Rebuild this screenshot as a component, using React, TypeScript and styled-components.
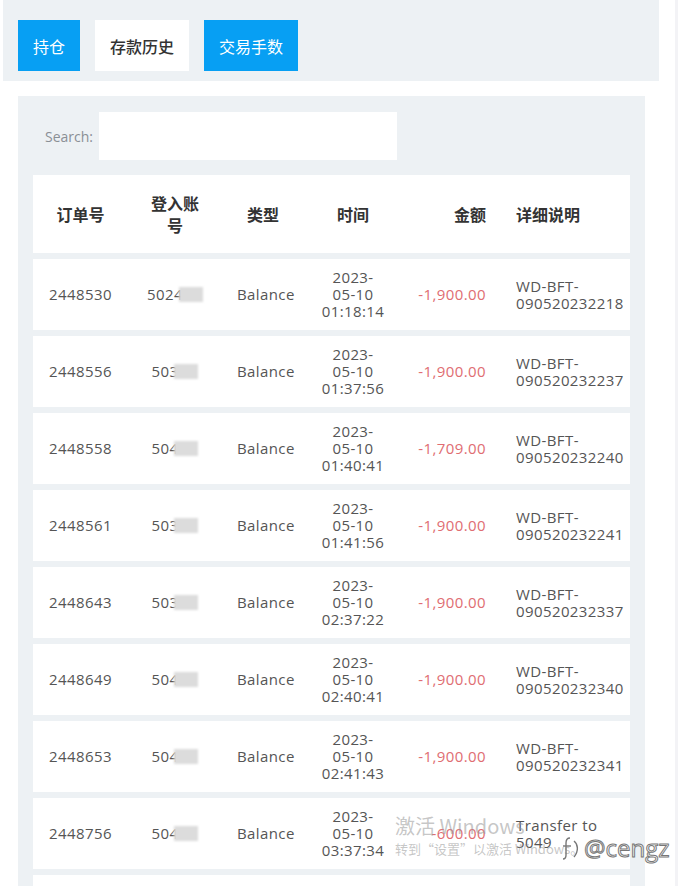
import React from "react";
import styled, { createGlobalStyle } from "styled-components";

const GlobalStyle = createGlobalStyle`
  html, body {
    margin: 0;
    padding: 0;
    background: #ffffff;
  }
  body {
    font-family: "Open Sans", "Noto Sans CJK SC", sans-serif;
    color: #555;
  }
`;

const Page = styled.div`
  position: relative;
  width: 678px;
  min-height: 886px;
  border-right: 3px solid #f3f3f6;
  box-sizing: border-box;
`;

const TabBar = styled.div`
  display: flex;
  gap: 15px;
  margin-left: 3px;
  width: 656px;
  height: 81px;
  box-sizing: border-box;
  padding: 20px 15px 0;
  background: #edf1f4;
`;

const TabButton = styled.div<{ $active?: boolean }>`
  height: 51px;
  padding: 0 15px;
  display: flex;
  align-items: center;
  font-family: "Noto Sans CJK SC", sans-serif;
  font-size: 16px;
  background: ${(p) => (p.$active ? "#ffffff" : "#079ff3")};
  color: ${(p) => (p.$active ? "#333" : "#ffffff")};
  font-weight: ${(p) => (p.$active ? 500 : 400)};
`;

const Panel = styled.div`
  margin: 15px 0 0 18px;
  width: 627px;
  box-sizing: border-box;
  padding: 16px 15px 0;
  background: #edf1f4;
`;

const SearchRow = styled.label`
  display: flex;
  align-items: center;
  padding-left: 12px;
  font-size: 14px;
  color: #8a8f94;
`;

const SearchInput = styled.div`
  width: 298px;
  height: 48px;
  margin-left: 6px;
  background: #ffffff;
`;

const Table = styled.table`
  width: 597px;
  margin-top: 9px;
  border-collapse: separate;
  border-spacing: 0 6px;
  table-layout: fixed;
  margin-bottom: -6px;
`;

const HeadCell = styled.th<{ $align?: string }>`
  height: 78px;
  padding: 0 15px;
  background: #ffffff;
  font-family: "Noto Sans CJK SC", sans-serif;
  font-size: 16px;
  font-weight: 700;
  color: #333;
  line-height: 22px;
  text-align: ${(p) => p.$align || "center"};
`;

const Cell = styled.td<{ $align?: string; $tight?: boolean }>`
  height: 71px;
  padding: ${(p) => (p.$tight ? "0 2px 0 15px" : "0 15px")};
  background: #ffffff;
  font-size: 15px;
  line-height: 17px;
  letter-spacing: 0.4px;
  color: #555;
  white-space: nowrap;
  text-align: ${(p) => p.$align || "center"};
`;

const Amount = styled.span`
  color: #e06d72;
`;

const Masked = styled.span`
  display: inline-block;
  width: 24px;
  height: 15px;
  margin-left: -4px;
  vertical-align: -2px;
  background: #dcdcdc;
  filter: blur(1px);
`;

const Watermark = styled.div`
  position: absolute;
  left: 395px;
  top: 812px;
  color: rgba(150, 150, 150, 0.55);
  font-family: "Noto Sans CJK SC", sans-serif;
  pointer-events: none;
`;

const WmTitle = styled.div`
  font-size: 20px;
  line-height: 28px;
`;

const WmSub = styled.div`
  font-size: 13px;
  line-height: 18px;
`;

const Handle = styled.div`
  position: absolute;
  left: 560px;
  top: 831px;
  display: flex;
  align-items: center;
  gap: 2px;
  font-family: "Open Sans", sans-serif;
  font-size: 24px;
  color: rgba(255, 255, 255, 0.8);
  -webkit-text-stroke: 1px #777;
  pointer-events: none;
`;

interface Row {
  id: string;
  acct: string;
  time: string;
  amount: string;
  detail: [string, string];
}

const rows: Row[] = [
  { id: "2448530", acct: "5024", time: "01:18:14", amount: "-1,900.00", detail: ["WD-BFT-", "090520232218"] },
  { id: "2448556", acct: "503", time: "01:37:56", amount: "-1,900.00", detail: ["WD-BFT-", "090520232237"] },
  { id: "2448558", acct: "504", time: "01:40:41", amount: "-1,709.00", detail: ["WD-BFT-", "090520232240"] },
  { id: "2448561", acct: "503", time: "01:41:56", amount: "-1,900.00", detail: ["WD-BFT-", "090520232241"] },
  { id: "2448643", acct: "503", time: "02:37:22", amount: "-1,900.00", detail: ["WD-BFT-", "090520232337"] },
  { id: "2448649", acct: "504", time: "02:40:41", amount: "-1,900.00", detail: ["WD-BFT-", "090520232340"] },
  { id: "2448653", acct: "504", time: "02:41:43", amount: "-1,900.00", detail: ["WD-BFT-", "090520232341"] },
  { id: "2448756", acct: "504", time: "03:37:34", amount: "-600.00", detail: ["Transfer to", "5049"] },
  { id: "2448790", acct: "504", time: "03:52:10", amount: "-1,900.00", detail: ["WD-BFT-", "090520232352"] },
];

const App: React.FC = () => {
  return (
    <Page>
      <GlobalStyle />
      <TabBar>
        <TabButton>持仓</TabButton>
        <TabButton $active>存款历史</TabButton>
        <TabButton>交易手数</TabButton>
      </TabBar>
      <Panel>
        <SearchRow>
          Search:
          <SearchInput />
        </SearchRow>
        <Table>
          <colgroup>
            <col style={{ width: 95 }} />
            <col style={{ width: 94 }} />
            <col style={{ width: 82 }} />
            <col style={{ width: 98 }} />
            <col style={{ width: 99 }} />
            <col style={{ width: 129 }} />
          </colgroup>
          <thead>
            <tr>
              <HeadCell>订单号</HeadCell>
              <HeadCell>
                登入账
                <br />号
              </HeadCell>
              <HeadCell>类型</HeadCell>
              <HeadCell>时间</HeadCell>
              <HeadCell $align="right">金额</HeadCell>
              <HeadCell $align="left">详细说明</HeadCell>
            </tr>
          </thead>
          <tbody>
            {rows.map((r) => (
              <tr key={r.id}>
                <Cell>{r.id}</Cell>
                <Cell>
                  {r.acct}
                  <Masked />
                </Cell>
                <Cell>Balance</Cell>
                <Cell>
                  2023-
                  <br />
                  05-10
                  <br />
                  {r.time}
                </Cell>
                <Cell $align="right">
                  <Amount>{r.amount}</Amount>
                </Cell>
                <Cell $align="left" $tight>
                  {r.detail[0]}
                  <br />
                  {r.detail[1]}
                </Cell>
              </tr>
            ))}
          </tbody>
        </Table>
      </Panel>
      <Watermark>
        <WmTitle>激活 Windows</WmTitle>
        <WmSub>转到“设置”以激活 Windows。</WmSub>
      </Watermark>
      <Handle>
        <svg width="22" height="26" viewBox="0 0 22 26" fill="none" stroke="#777" strokeWidth="1.4">
          <path d="M10 3c-3 0-4 2-4 5v12c0 3-1 4-3 4" />
          <path d="M3 11h8" />
          <path d="M14 6c4 3 5 10 0 16" />
        </svg>
        @cengz
      </Handle>
    </Page>
  );
};

export default App;
